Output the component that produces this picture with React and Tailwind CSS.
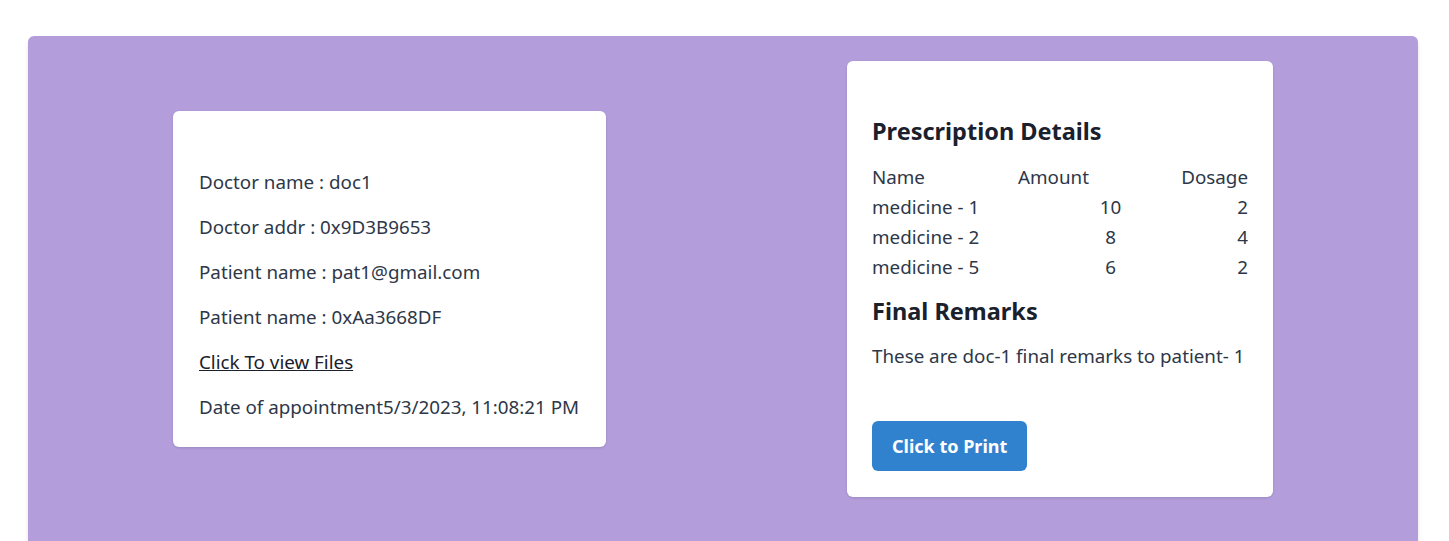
const INFO = [
  'Doctor name : doc1',
  'Doctor addr : 0x9D3B9653',
  'Patient name : pat1@gmail.com',
  'Patient name : 0xAa3668DF',
]

const MEDICINES = [
  { name: 'medicine - 1', amount: 10, dosage: 2 },
  { name: 'medicine - 2', amount: 8, dosage: 4 },
  { name: 'medicine - 5', amount: 6, dosage: 2 },
]

export default function App() {
  return (
    <div
      className="min-h-screen bg-white pt-[36px] pl-[28px] pr-[31px] text-[#2d3748]"
      style={{ fontFamily: '"Noto Sans", "Open Sans", sans-serif' }}
    >
      <div className="h-[560px] rounded-md bg-[#b39ddb] shadow-md px-[145px] pt-[25px]">
        <div className="flex items-center justify-between">
          <div className="w-[433px] rounded-md bg-white shadow-sm px-[26px] pt-[58px] pb-[26px] text-[18.8px] leading-[27px] whitespace-nowrap">
            <div className="flex flex-col gap-[18px]">
              {INFO.map((line) => (
                <p key={line}>{line}</p>
              ))}
              <a href="#" className="underline text-[#1a202c]">
                Click To view Files
              </a>
              <p>Date of appointment5/3/2023, 11:08:21 PM</p>
            </div>
          </div>

          <div className="w-[426px] rounded-md bg-white shadow-sm px-[25px] pt-[56px] pb-[26px] text-[18.8px] whitespace-nowrap">
            <h2 className="text-[23.5px] leading-[29px] font-bold text-[#1a202c]">Prescription Details</h2>
            <div className="mt-[16px] leading-[30px]">
              <div className="flex">
                <span className="w-[146px]">Name</span>
                <span className="flex-1">Amount</span>
                <span className="text-right">Dosage</span>
              </div>
              {MEDICINES.map((m) => (
                <div key={m.name} className="flex">
                  <span className="w-[146px]">{m.name}</span>
                  <span className="flex-1 pl-[21px] text-center">{m.amount}</span>
                  <span className="w-[66px] text-right">{m.dosage}</span>
                </div>
              ))}
            </div>
            <h2 className="mt-[15px] text-[23.5px] leading-[29px] font-bold text-[#1a202c]">Final Remarks</h2>
            <p className="mt-[17px] leading-[27px]">These are doc-1 final remarks to patient- 1</p>
            <button className="mt-[51px] h-[50px] px-[20px] rounded-md bg-[#3182ce] text-white font-bold text-[18px]">
              Click to Print
            </button>
          </div>
        </div>
      </div>
    </div>
  )
}
